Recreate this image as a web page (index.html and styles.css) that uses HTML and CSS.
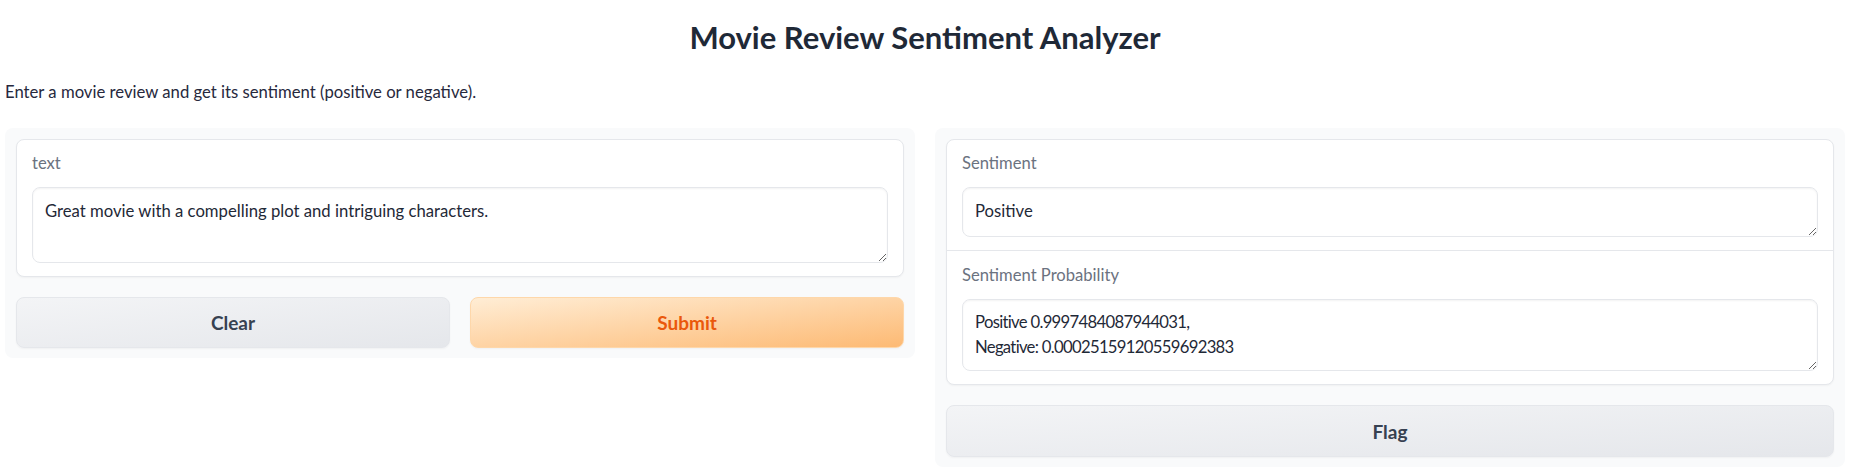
FILE: index.html
```html
<!DOCTYPE html>
<html>
<head>
<meta charset="utf-8">
<link rel="stylesheet" href="styles.css">
</head>
<body>
<div class="app">
  <h1 class="title">Movie Review Sentiment Analyzer</h1>
  <p class="desc">Enter a movie review and get its sentiment (positive or negative).</p>
  <div class="cols">
    <div class="panel">
      <div class="block">
        <div class="field">
          <span class="lbl">text</span>
          <textarea class="ta ta-in">Great movie with a compelling plot and intriguing characters.</textarea>
        </div>
      </div>
      <div class="btn-row">
        <button class="btn btn-secondary">Clear</button>
        <button class="btn btn-primary">Submit</button>
      </div>
    </div>
    <div class="panel">
      <div class="block">
        <div class="field">
          <span class="lbl">Sentiment</span>
          <textarea class="ta ta-one">Positive</textarea>
        </div>
        <div class="field field-sep">
          <span class="lbl">Sentiment Probability</span>
          <textarea class="ta ta-two">Positive 0.9997484087944031,
Negative: 0.00025159120559692383</textarea>
        </div>
      </div>
      <button class="btn btn-secondary btn-full">Flag</button>
    </div>
  </div>
</div>
</body>
</html>
```

FILE: styles.css
```css
* { box-sizing: border-box; }
html, body { margin: 0; padding: 0; background: #ffffff; }
body {
  font-family: Lato, "Liberation Sans", sans-serif;
  color: #1f2937;
}
.app {
  padding: 0 8px 0 5px;
}
.title {
  margin: 17px 0 0 0;
  font-size: 31px;
  line-height: 40px;
  font-weight: 700;
  text-align: center;
  color: #1f2937;
}
.desc {
  margin: 23px 0 0 0;
  font-size: 16.7px;
  line-height: 24px;
  color: #27293d;
}
.cols {
  margin-top: 24px;
  display: flex;
  gap: 20px;
  align-items: flex-start;
}
.panel {
  flex: 1 1 0;
  background: #f9fafb;
  border-radius: 8px;
  padding: 11px 11px 10px 11px;
  display: flex;
  flex-direction: column;
  gap: 20px;
}
.block {
  background: #ffffff;
  border: 1px solid #e5e7eb;
  border-radius: 8px;
  box-shadow: 0 1px 2px rgba(0,0,0,0.04);
  overflow: hidden;
}
.field {
  padding: 13px 15px 13px 15px;
  display: flex;
  flex-direction: column;
  gap: 14px;
}
.field-sep {
  border-top: 1px solid #e5e7eb;
  padding-top: 14px;
  padding-bottom: 13px;
}
.lbl {
  font-size: 16.6px;
  line-height: 20px;
  color: #6b7280;
}
.ta {
  display: block;
  width: 100%;
  font-family: Lato, "Liberation Sans", sans-serif;
  font-size: 16.7px;
  line-height: 24px;
  color: #1f2937;
  background: #ffffff;
  border: 1px solid #e5e7eb;
  border-radius: 8px;
  padding: 11px 12px;
  box-shadow: inset 0 1px 2px rgba(0,0,0,0.05);
  resize: vertical;
  outline: none;
  overflow: hidden;
}
.ta-in { height: 76px; }
.ta-one { height: 50px; }
.ta-two { height: 72px; padding-top: 10px; line-height: 25px; letter-spacing: -0.7px; }
.btn-row {
  display: flex;
  gap: 20px;
}
.btn {
  flex: 1 1 0;
  height: 51px;
  border-radius: 8px;
  font-family: Lato, "Liberation Sans", sans-serif;
  font-size: 19px;
  font-weight: 700;
  cursor: pointer;
}
.btn-full {
  flex: none;
  width: 100%;
  height: 52px;
}
.btn-secondary {
  background: linear-gradient(to bottom right, #f3f4f6, #e5e7eb);
  border: 1px solid #e5e7eb;
  color: #374151;
  box-shadow: 0 1px 2px rgba(0,0,0,0.04);
}
.btn-primary {
  background: linear-gradient(to bottom right, #ffedd5, #fdba74);
  border: 1px solid #fed7aa;
  color: #ea580c;
  box-shadow: 0 1px 2px rgba(0,0,0,0.04);
}
```
